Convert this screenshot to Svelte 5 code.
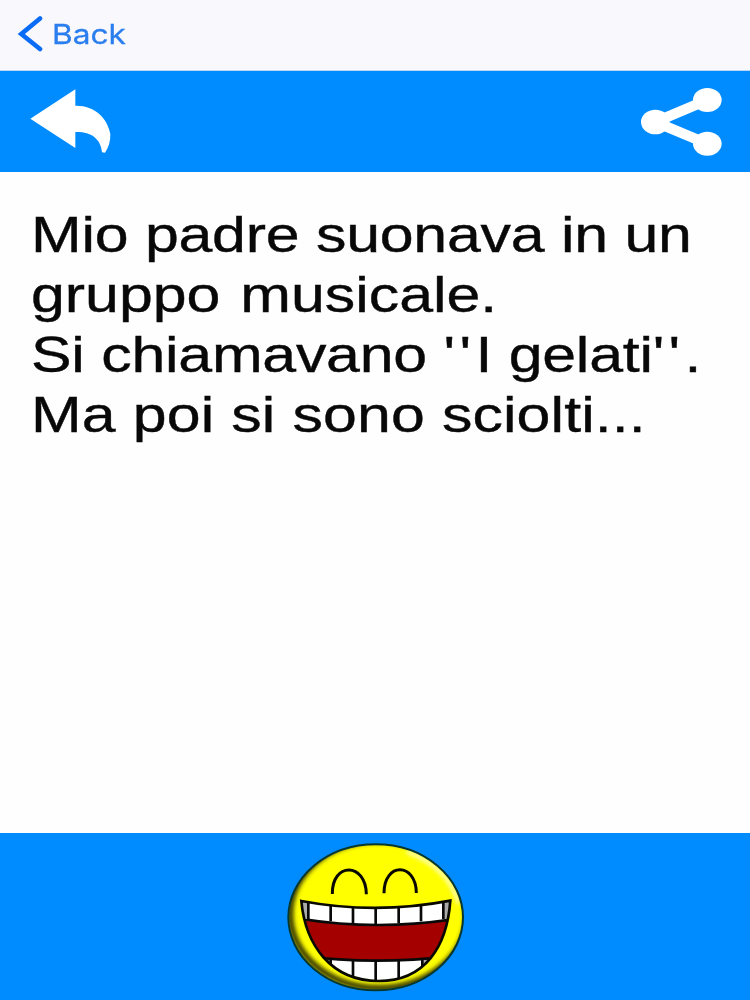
<script>
  const upperTeeth = [115, 182, 249, 317, 386, 453, 520];
  const lowerTeeth = [182, 249, 317, 386, 457];
</script>

<div class="screen">
  <nav class="navbar">
    <button class="back">
      <svg width="26" height="38" viewBox="0 0 26 38">
        <path d="M23 3.5 L4.3 19 L23 34" fill="none" stroke="#0a6cf5" stroke-width="4.6" stroke-linecap="round" />
      </svg>
      <span>Back</span>
    </button>
  </nav>

  <header class="toolbar">
    <button aria-label="Previous">
      <svg width="82" height="66" viewBox="91 264 246 198">
        <path
          d="M92 356 L227 268 V317 C282 315 323 352 332 402 Q333 433 316 458 L307 457 C304 414 270 394 227 396 V444 Z"
          fill="#fff"
        />
      </svg>
    </button>
    <button aria-label="Share">
      <svg width="82" height="68" viewBox="123 83 246 204">
        <path d="M322 119 L166 185 L322 250" fill="none" stroke="#fff" stroke-width="31" />
        <ellipse cx="166" cy="185" rx="43" ry="37" fill="#fff" />
        <ellipse cx="322" cy="119" rx="43" ry="36" fill="#fff" />
        <ellipse cx="322" cy="250" rx="43" ry="36" fill="#fff" />
      </svg>
    </button>
  </header>

  <main>
    <p class="joke">
      <span class="line tight">Mio padre suonava in un</span>
      <span class="line wide">gruppo musicale.</span>
      <span class="line tight">Si chiamavano <span class="quote">''</span>I gelati<span class="quote">''</span>.</span>
      <span class="line loose">Ma poi si sono sciolti...</span>
    </p>
  </main>

  <footer>
    <svg width="180" height="152" viewBox="48 48 540 456">
      <defs>
        <clipPath id="face">
          <ellipse cx="317" cy="277" rx="261" ry="218" />
        </clipPath>
        <clipPath id="mouth">
          <path d="M94 228 Q317 270 541 227 C531 365 465 468 326 468 C183 468 106 360 94 228 Z" />
        </clipPath>
        <filter id="soft" x="-10%" y="-10%" width="120%" height="120%">
          <feGaussianBlur stdDeviation="7" />
        </filter>
      </defs>
      <ellipse cx="317" cy="277" rx="261" ry="218" fill="#ff0" />
      <g clip-path="url(#face)">
        <ellipse cx="327" cy="267" rx="266" ry="222" fill="none" stroke="#343400" stroke-width="18" filter="url(#soft)" />
        <path d="M410 80 Q535 125 566 235" fill="none" stroke="#ffffd8" stroke-width="10" filter="url(#soft)" />
      </g>
      <ellipse cx="317" cy="277" rx="262" ry="219" fill="none" stroke="#07382f" stroke-width="6" />
      <g fill="none" stroke="#090900" stroke-width="9">
        <path d="M187 207 C185 111 288 111 289 208" />
        <path d="M342 205 C342 110 438 112 439 204" />
      </g>
      <g clip-path="url(#mouth)">
        <rect x="90" y="220" width="460" height="255" fill="#a40000" />
        <path d="M90 220 H550 V283 Q317 318 90 281 Z" fill="#fff" stroke="#090909" stroke-width="8" />
        <path d="M80 391 Q317 423 560 391 V490 H80 Z" fill="#fff" stroke="#090909" stroke-width="8" />
        <path d="M94 220 H114 V282 H94 Z M522 220 H545 V282 H522 Z M160 405 H181 V417 H160 Z M458 405 H480 V417 H458 Z" fill="#aaa" />
        <g stroke="#090909" stroke-width="8">
          {#each upperTeeth as x}
            <line x1={x} y1="225" x2={x} y2={300 - Math.abs(x - 317) / 12} />
          {/each}
          {#each lowerTeeth as x}
            <line x1={x} y1={407 - Math.abs(x - 317) / 25} x2={x} y2="475" />
          {/each}
        </g>
      </g>
      <path
        d="M94 228 Q317 270 541 227 C531 365 465 468 326 468 C183 468 106 360 94 228 Z"
        fill="none"
        stroke="#090900"
        stroke-width="8"
      />
    </svg>
  </footer>
</div>

<style>
  :global(body) {
    margin: 0;
  }

  .screen {
    display: flex;
    flex-direction: column;
    width: 750px;
    height: 1000px;
    overflow: hidden;
    background-color: #fefefe;
  }

  button {
    display: flex;
    border: 0;
    padding: 0;
    background: none;
  }

  svg {
    display: block;
  }

  .navbar {
    box-sizing: border-box;
    height: 71px;
    padding: 15px 0 0 17px;
    background-color: #f9f8fc;
    border-bottom: 1px solid #bbd7f3;
  }

  .back {
    align-items: center;
    gap: 9px;
    color: #2b7eee;
    font: 27.5px/38px Inter, sans-serif;
  }

  .back span {
    transform: scaleX(1.15);
    transform-origin: left;
    -webkit-text-stroke: 0.3px #2b7eee;
  }

  .toolbar {
    box-sizing: border-box;
    display: flex;
    justify-content: space-between;
    height: 101px;
    padding: 17px 27px 0 30px;
    background-color: #008cff;
  }

  main {
    flex: 1;
    padding: 32.5px 28px 0 30.5px;
  }

  /* Body text is set slightly extended */
  .joke {
    margin: 0;
    color: #080808;
    font: 50.7px/60px "Liberation Sans", Arial, sans-serif;
    white-space: nowrap;
    -webkit-text-stroke: 0.4px #080808;
    transform: scaleX(1.2);
    transform-origin: left;
  }

  .line {
    display: block;
  }

  .tight {
    letter-spacing: -0.2px;
  }

  .wide {
    word-spacing: 2.5px;
  }

  .loose {
    letter-spacing: 0.1px;
  }

  .quote {
    letter-spacing: 3.6px;
  }

  footer {
    box-sizing: border-box;
    display: flex;
    justify-content: center;
    height: 167px;
    padding-top: 8px;
    padding-left: 2px;
    background-color: #008cff;
  }
</style>
